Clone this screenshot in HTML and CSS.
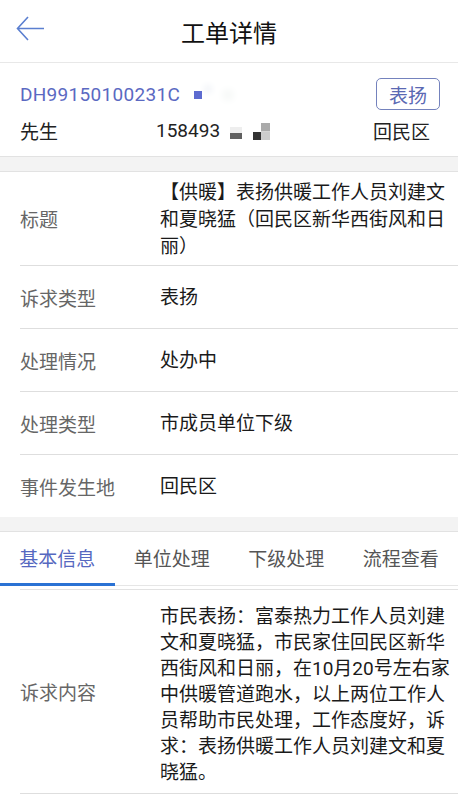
FILE: index.html
```html
<!DOCTYPE html>
<html lang="zh-CN">
<head>
    <meta charset="utf-8">
    <title>工单详情</title>
    <link rel="stylesheet" href="styles.css">
</head>
<body>
    <div class="header">
        <svg class="back" width="30" height="30" viewBox="0 0 30 30">
            <path d="M28 13.5H2M12 2L1.5 13.5L12 25" fill="none" stroke="#5b7fd0" stroke-width="1.6"/>
        </svg>
        <h1>工单详情</h1>
    </div>

    <div class="info">
        <div class="info-top">
            <span class="order-no">DH99150100231C</span>
            <span class="blur blur-blue"></span>
            <span class="praise">表扬</span>
        </div>
        <div class="info-bottom">
            <span class="name">先生</span>
            <span class="phone">158493<span class="blur blur-a"></span><span class="blur blur-b"></span></span>
            <span class="area">回民区</span>
        </div>
    </div>

    <div class="band"></div>

    <div class="list">
        <div class="row">
            <div class="label">标题</div>
            <div class="value title">【供暖】表扬供暖工作人员刘建文和夏晓猛（回民区新华西街风和日丽）</div>
        </div>
        <div class="row">
            <div class="label">诉求类型</div>
            <div class="value">表扬</div>
        </div>
        <div class="row">
            <div class="label">处理情况</div>
            <div class="value">处办中</div>
        </div>
        <div class="row">
            <div class="label">处理类型</div>
            <div class="value">市成员单位下级</div>
        </div>
        <div class="row last">
            <div class="label">事件发生地</div>
            <div class="value">回民区</div>
        </div>
    </div>

    <div class="band"></div>

    <div class="tabs">
        <div class="tab active">基本信息</div>
        <div class="tab">单位处理</div>
        <div class="tab">下级处理</div>
        <div class="tab">流程查看</div>
    </div>

    <div class="list content">
        <div class="row">
            <div class="label">诉求内容</div>
            <div class="value">市民表扬：富泰热力工作人员刘建文和夏晓猛，市民家住回民区新华西街风和日丽，在10月20号左右家中供暖管道跑水，以上两位工作人员帮助市民处理，工作态度好，诉求：表扬供暖工作人员刘建文和夏晓猛。</div>
        </div>
    </div>
</body>
</html>
```

FILE: styles.css
```css
body {
    margin: 0;
    font-family: Roboto, "Noto Sans CJK SC", sans-serif;
    background-color: #fff;
    color: #1a1a1a;
    width: 458px;
    overflow: hidden;
}

.header {
    height: 62px;
    display: flex;
    align-items: center;
    justify-content: center;
    position: relative;
    border-bottom: 1px solid #e8e8e8;
}

.back {
    position: absolute;
    left: 16px;
    top: 15px;
}

h1 {
    margin: 0;
    font-size: 24px;
    font-weight: normal;
    color: #111;
}

.info {
    padding: 15px 18px 13px 20px;
    border-bottom: 1px solid #e2e2e2;
}

.info-top {
    display: flex;
    align-items: center;
    height: 32px;
}

.order-no {
    font-size: 19px;
    letter-spacing: 0.3px;
    color: #5b69c2;
    white-space: nowrap;
}

.blur {
    display: inline-block;
}

.blur-blue {
    width: 8px;
    height: 8px;
    background-color: #5d6bd0;
    margin-left: 14px;
    margin-top: 2px;
    box-shadow: 10px -6px 6px #f2f4f8, 30px 0 8px #eef2f0;
}

.praise {
    margin-left: auto;
    width: 62px;
    height: 30px;
    border: 1px solid #7482bd;
    border-radius: 5px;
    color: #5a68b3;
    font-size: 19px;
    display: flex;
    align-items: center;
    justify-content: center;
}

.info-bottom {
    display: flex;
    align-items: center;
    height: 26px;
    margin-top: 7px;
    font-size: 19px;
    color: #222;
}

.name {
    width: 136px;
}

.phone {
    flex: 1;
    display: flex;
    align-items: center;
}

.blur-a {
    width: 12px;
    height: 12px;
    margin-left: 10px;
    margin-top: 6px;
    background: linear-gradient(to bottom, #eeeeee 50%, #606060 50%);
}

.blur-b {
    width: 17px;
    height: 17px;
    margin-left: 11px;
    margin-top: 3px;
    background:
        linear-gradient(to right, transparent 50%, #aaa 50%) top / 100% 50% no-repeat,
        linear-gradient(to right, #333 50%, #ccc 50%) bottom / 100% 50% no-repeat;
}

.area {
    margin-right: 10px;
}

.band {
    height: 14px;
    background-color: #f3f3f3;
    border-bottom: 1px solid #e2e2e2;
}

.list {
    font-size: 19px;
}

.row {
    display: flex;
    align-items: center;
    min-height: 62px;
    margin-left: 20px;
    border-bottom: 1px solid #dedede;
}

.row.last {
    border-bottom: none;
}

.label {
    width: 140px;
    flex-shrink: 0;
    color: #666;
}

.value {
    width: 295px;
    line-height: 27px;
    color: #1a1a1a;
}

.value.title {
    padding: 7px 0 5px;
}

.tabs {
    display: flex;
    height: 53px;
    border-bottom: 1px solid #e6e6e6;
}

.tab {
    flex: 1;
    display: flex;
    align-items: center;
    justify-content: center;
    font-size: 19px;
    color: #555;
    border-bottom: 3px solid transparent;
    margin-bottom: -1px;
}

.tab.active {
    color: #5668c0;
    border-bottom-color: #2a72d4;
}

.content {
    border-top: 1px solid #e2e2e2;
    margin-top: 3px;
    margin-left: 20px;
}

.content .row {
    margin-left: 0;
}

.content .value {
    line-height: 26px;
    padding: 14px 0 7px;
}
```
